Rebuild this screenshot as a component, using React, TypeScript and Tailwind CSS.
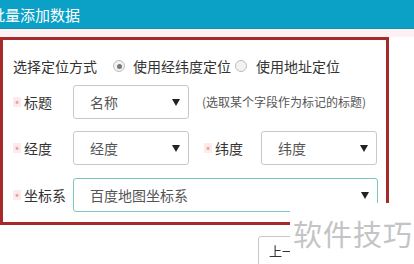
import React from "react";

const font = { fontFamily: '"Noto Sans CJK SC", "Noto Sans", sans-serif' };

function Arrow() {
  return (
    <svg width="8" height="7" viewBox="0 0 8 7" className="shrink-0">
      <polygon points="0,0 8,0 4,7" fill="#222" />
    </svg>
  );
}

function Select({ text, w, focus }: { text: string; w: string; focus?: boolean }) {
  return (
    <div
      className={`${w} h-[34px] rounded-[3px] border ${focus ? "border-[#7cc6c0]" : "border-[#c8c8c8]"} bg-white flex items-center justify-between pl-[16px] pr-[8px] text-[14px] text-[#555]`}
    >
      <span>{text}</span>
      <Arrow />
    </div>
  );
}

function Label({ text, w }: { text: string; w: string }) {
  return (
    <div className={`${w} flex items-center text-[14px] text-[#333]`}>
      <span className="text-[#f08a8a] text-[11px] bg-[#fcebed] w-[8px] h-[10px] mr-[3px] flex items-center justify-center leading-none pt-[4px]">*</span>
      <span>{text}</span>
    </div>
  );
}

function Radio({ on }: { on?: boolean }) {
  return (
    <span className="w-[12px] h-[12px] rounded-full border border-[#bdbdbd] bg-[#f2f2f2] flex items-center justify-center shrink-0">
      {on && <span className="w-[5px] h-[5px] rounded-full bg-[#777]" />}
    </span>
  );
}

export default function App() {
  return (
    <div className="w-[414px] h-[264px] bg-white relative overflow-hidden" style={font}>
      <div className="h-[29px] bg-[#0ba0c6] border-b border-[#1a8fa8] flex items-center overflow-hidden">
        <span className="ml-[-10px] text-white text-[15px] leading-none">批量添加数据</span>
      </div>
      <div className="h-[8px] bg-[#fdf1f3]" />
      <div className="w-[389px] h-[188px] border-[3px] border-[#a62a2a] flex flex-col pl-[10px]">
        <div className="mt-[16px] h-[20px] flex items-center text-[14px] text-[#333]">
          <span className="w-[100px]">选择定位方式</span>
          <Radio on />
          <span className="ml-[8px] w-[102px]">使用经纬度定位</span>
          <Radio />
          <span className="ml-[9px]">使用地址定位</span>
        </div>
        <div className="mt-[9px] flex items-center">
          <Label text="标题" w="w-[60px]" />
          <Select text="名称" w="w-[116px]" />
          <span className="ml-[13px] text-[12px] text-[#555]">(选取某个字段作为标记的标题)</span>
        </div>
        <div className="mt-[12px] flex items-center">
          <Label text="经度" w="w-[60px]" />
          <Select text="经度" w="w-[116px]" />
          <div className="ml-[15px]">
            <Label text="纬度" w="w-[57px]" />
          </div>
          <Select text="纬度" w="w-[116px]" />
        </div>
        <div className="mt-[13px] flex items-center">
          <Label text="坐标系" w="w-[60px]" />
          <Select text="百度地图坐标系" w="w-[305px]" focus />
        </div>
      </div>
      <div className="ml-[258px] mt-[11px] w-[60px] h-[30px] border border-[#c8c8c8] rounded-[3px] flex items-center pl-[10px] text-[13px] text-[#333]">
        上一步
      </div>
      <div className="absolute left-[290px] top-[203px] w-[124px] h-[61px] bg-white flex items-start">
        <span className="mt-[16px] ml-[3px] text-[29px] leading-none text-[#c4c4c4] tracking-[1px]">软件技巧</span>
      </div>
    </div>
  );
}
